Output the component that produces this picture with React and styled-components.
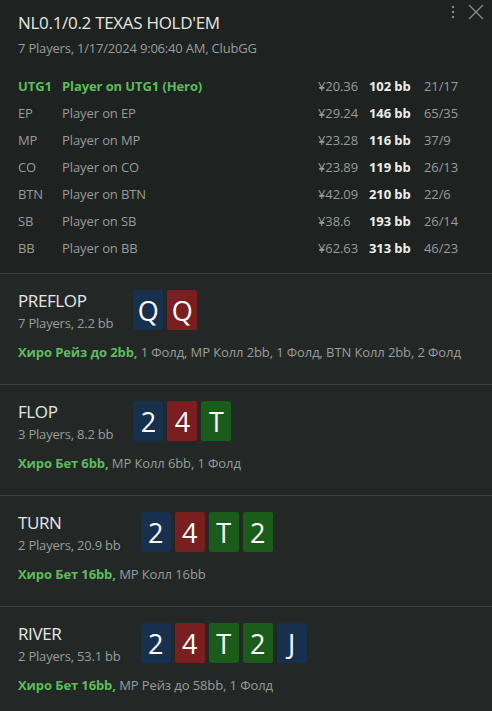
import styled, { createGlobalStyle } from 'styled-components';

const GlobalStyle = createGlobalStyle`
  html, body {
    margin: 0;
    padding: 0;
    background-color: #232826;
  }
  body {
    font-family: "Open Sans", "Noto Sans", sans-serif;
    color: #c8cac9;
  }
`;

const Panel = styled.div`
  width: 492px;
  display: flex;
  flex-direction: column;
  background-color: #232826;
`;

const Header = styled.div`
  position: relative;
  background-color: #1e2220;
  padding: 11px 0 12px 18px;
`;

const Title = styled.div`
  font-size: 17px;
  color: #e6e7e6;
  line-height: 24px;
  letter-spacing: -0.3px;
`;

const Subtitle = styled.div`
  font-size: 13px;
  color: #9a9d9b;
  line-height: 20px;
  margin-top: 3px;
  letter-spacing: -0.2px;
`;

const Controls = styled.div`
  position: absolute;
  top: 2px;
  right: 6px;
  display: flex;
  align-items: center;
  gap: 10px;
`;

const PlayerTable = styled.div`
  margin-top: 14px;
  display: grid;
  grid-template-columns: 44px 256px 51px 55px 1fr;
  grid-auto-rows: 27px;
  align-items: center;
  font-size: 13px;
  letter-spacing: -0.1px;
`;

const Cell = styled.div`
  color: ${p => (p.$hero ? '#5cbd5c' : p.$bright ? '#eceeed' : '#999c9a')};
  font-weight: ${p => (p.$hero || p.$bright ? 700 : 400)};
  white-space: nowrap;
`;

const Street = styled.div`
  border-top: 1px solid #3b3f3d;
  padding: 16px 18px 23px 18px;
  display: flex;
  flex-direction: column;
  gap: 11px;
`;

const StreetTop = styled.div`
  display: flex;
  align-items: flex-start;
  gap: 20px;
`;

const StreetInfo = styled.div`
  display: flex;
  flex-direction: column;
  gap: 2px;
`;

const StreetName = styled.div`
  font-size: 17px;
  color: #e6e7e6;
  line-height: 22px;
  letter-spacing: -0.4px;
`;

const StreetSub = styled.div`
  font-size: 13px;
  color: #9a9d9b;
  line-height: 18px;
  letter-spacing: -0.2px;
`;

const Cards = styled.div`
  display: flex;
  gap: 4px;
`;

const cardColors = {
  b: '#16304d',
  r: '#7a1f1f',
  g: '#1b5c1b',
};

const Card = styled.div`
  width: 30px;
  height: 40px;
  border-radius: 2px;
  background-color: ${p => cardColors[p.$c]};
  color: #ffffff;
  font-size: 27px;
  display: flex;
  align-items: center;
  justify-content: center;
  line-height: 1;
`;

const Action = styled.div`
  font-size: 13px;
  line-height: 18px;
  color: #999c9a;
  letter-spacing: -0.1px;
  white-space: nowrap;
`;

const HeroAction = styled.span`
  color: #5cbd5c;
  font-weight: 700;
`;

const players = [
  ['UTG1', 'Player on UTG1 (Hero)', '¥20.36', '102 bb', '21/17', true],
  ['EP', 'Player on EP', '¥29.24', '146 bb', '65/35'],
  ['MP', 'Player on MP', '¥23.28', '116 bb', '37/9'],
  ['CO', 'Player on CO', '¥23.89', '119 bb', '26/13'],
  ['BTN', 'Player on BTN', '¥42.09', '210 bb', '22/6'],
  ['SB', 'Player on SB', '¥38.6', '193 bb', '26/14'],
  ['BB', 'Player on BB', '¥62.63', '313 bb', '46/23'],
];

const streets = [
  {
    name: 'PREFLOP',
    sub: '7 Players, 2.2 bb',
    cards: [['Q', 'b'], ['Q', 'r']],
    hero: 'Хиро Рейз до 2bb,',
    rest: ' 1 Фолд, MP Колл 2bb, 1 Фолд, BTN Колл 2bb, 2 Фолд',
  },
  {
    name: 'FLOP',
    sub: '3 Players, 8.2 bb',
    cards: [['2', 'b'], ['4', 'r'], ['T', 'g']],
    hero: 'Хиро Бет 6bb,',
    rest: ' MP Колл 6bb, 1 Фолд',
  },
  {
    name: 'TURN',
    sub: '2 Players, 20.9 bb',
    cards: [['2', 'b'], ['4', 'r'], ['T', 'g'], ['2', 'g']],
    hero: 'Хиро Бет 16bb,',
    rest: ' MP Колл 16bb',
  },
  {
    name: 'RIVER',
    sub: '2 Players, 53.1 bb',
    cards: [['2', 'b'], ['4', 'r'], ['T', 'g'], ['2', 'g'], ['J', 'b']],
    hero: 'Хиро Бет 16bb,',
    rest: ' MP Рейз до 58bb, 1 Фолд',
  },
];

export default function App() {
  return (
    <Panel>
      <GlobalStyle />
      <Header>
        <Controls>
          <svg width="6" height="16" viewBox="0 0 6 16">
            <circle cx="3" cy="3" r="1.2" fill="#8a8d8b" />
            <circle cx="3" cy="8" r="1.2" fill="#8a8d8b" />
            <circle cx="3" cy="13" r="1.2" fill="#8a8d8b" />
          </svg>
          <svg width="20" height="20" viewBox="0 0 20 20">
            <path d="M3 3 L17 17 M17 3 L3 17" stroke="#8a8d8b" strokeWidth="1.3" />
          </svg>
        </Controls>
        <Title>NL0.1/0.2 TEXAS HOLD'EM</Title>
        <Subtitle>7 Players, 1/17/2024 9:06:40 AM, ClubGG</Subtitle>
        <PlayerTable>
          {players.map(([pos, name, money, bb, stat, hero]) => (
            <>
              <Cell $hero={hero}>{pos}</Cell>
              <Cell $hero={hero}>{name}</Cell>
              <Cell>{money}</Cell>
              <Cell $bright>{bb}</Cell>
              <Cell>{stat}</Cell>
            </>
          ))}
        </PlayerTable>
      </Header>
      {streets.map(s => (
        <Street key={s.name}>
          <StreetTop>
            <StreetInfo>
              <StreetName>{s.name}</StreetName>
              <StreetSub>{s.sub}</StreetSub>
            </StreetInfo>
            <Cards>
              {s.cards.map(([v, c], i) => (
                <Card key={i} $c={c}>{v}</Card>
              ))}
            </Cards>
          </StreetTop>
          <Action>
            <HeroAction>{s.hero}</HeroAction>
            {s.rest}
          </Action>
        </Street>
      ))}
    </Panel>
  );
}
